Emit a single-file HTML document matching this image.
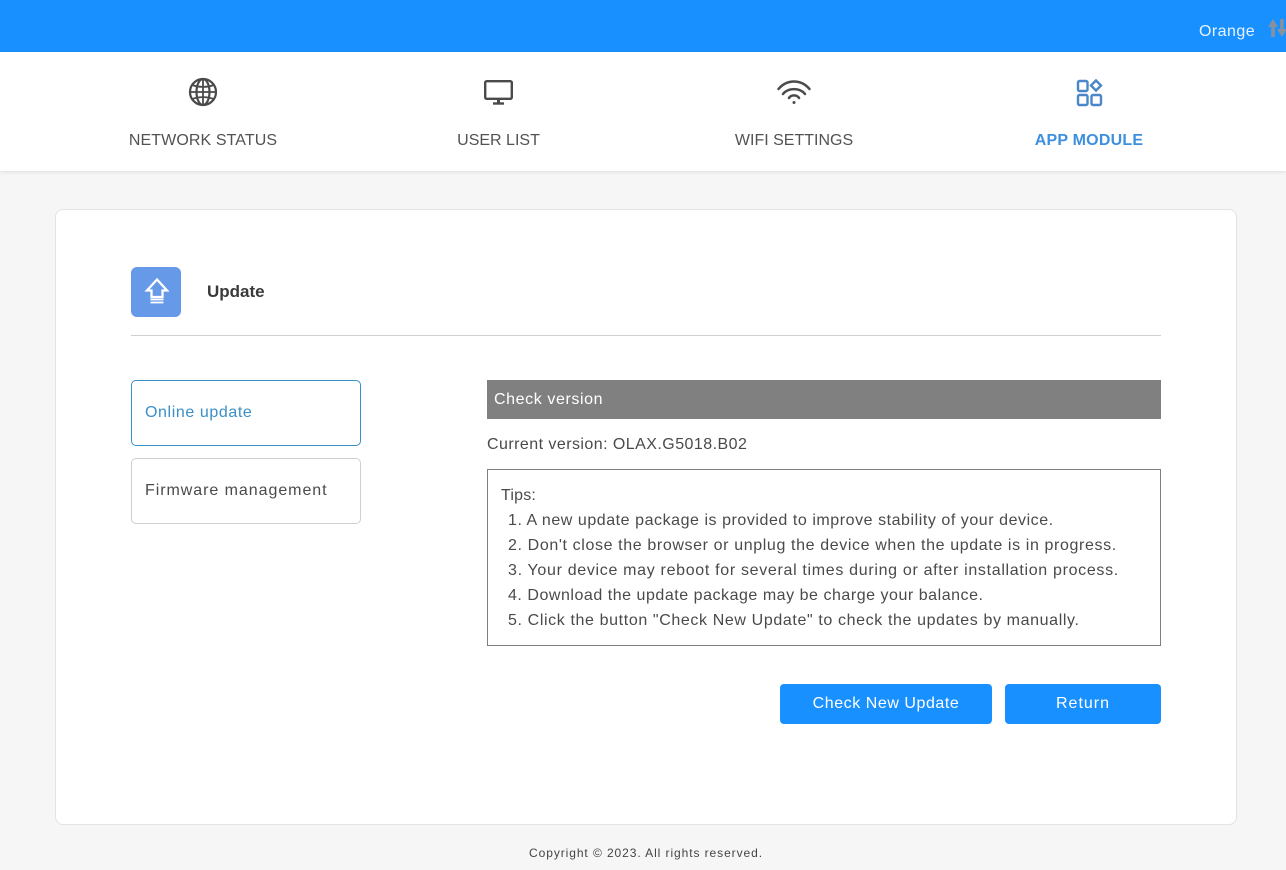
<!DOCTYPE html>
<html><head><meta charset="utf-8">
<style>
*{box-sizing:border-box}
html,body{margin:0;padding:0}
body{width:1286px;height:870px;position:relative;overflow:hidden;background:#f6f6f6;font-family:"Liberation Sans",sans-serif;color:#4a4a4a}
.a{position:absolute}
.t{position:absolute;white-space:nowrap;line-height:20px}
.c{transform:translateX(-50%)}
svg{position:absolute;overflow:visible}
</style></head><body>
<div class="a" style="left:0;top:0;width:1286px;height:52px;background:#1890ff"></div>
<div class="t" style="left:1199px;top:22px;font-size:16px;color:#e8f4ff;letter-spacing:.45px">Orange</div>
<svg style="left:1268px;top:18px" width="18" height="20" viewBox="0 0 18 20"><path d="M5 19V7" fill="none" stroke="#85929f" stroke-width="3.600"/><path d="M0 9l5-8 5 8z" fill="#85929f"/><path d="M14 1v12" fill="none" stroke="#85929f" stroke-width="3.600"/><path d="M9 11l5 8 5-8z" fill="#85929f"/></svg>

<div class="a" style="left:0;top:52px;width:1286px;height:119px;background:#fff;box-shadow:0 1px 4px rgba(0,0,0,.1)"></div>

<svg style="left:188px;top:77px" width="30" height="30" viewBox="0 0 30 30" fill="none" stroke="#4a4a4a" stroke-width="2.200"><circle cx="15" cy="15" r="13"/><ellipse cx="15" cy="15" rx="6.500" ry="13"/><path d="M15 2v26M2 15h26" stroke-width="1.800"/><path d="M4.500 8C10 10.500 20 10.500 25.500 8M4.500 22C10 19.500 20 19.500 25.500 22" stroke-width="1.800"/></svg>
<div class="t c" style="left:203px;top:131px;font-size:16px;letter-spacing:.1px;color:#525252">NETWORK STATUS</div>

<svg style="left:484px;top:80px" width="30" height="26" viewBox="0 0 30 26" fill="none" stroke="#4a4a4a" stroke-width="2.400"><rect x="1.200" y="1.200" width="26.600" height="17.600" rx="1.500"/><path d="M14.500 19v4" stroke-width="3"/><path d="M9 23.500h11"/></svg>
<div class="t c" style="left:498.500px;top:131px;font-size:16px;color:#525252">USER LIST</div>

<svg style="left:777px;top:80px" width="34" height="26" viewBox="0 0 34 26" fill="none" stroke="#4a4a4a" stroke-width="2.500" stroke-linecap="round"><path d="M1.500 9C10-1 24-1 32.500 9"/><path d="M6 14C11 7.500 23 7.500 28 14"/><path d="M12 18C14 14.500 20 14.500 22 18"/><circle cx="17" cy="22.500" r="1" fill="#4a4a4a" stroke-width="1"/></svg>
<div class="t c" style="left:794px;top:131px;font-size:16px;color:#525252">WIFI SETTINGS</div>

<svg style="left:1076px;top:79px" width="27" height="27" viewBox="0 0 27 27" fill="none" stroke="#4a86c8" stroke-width="2.400"><rect x="2" y="2" width="9.500" height="10" rx="1.500"/><rect x="2" y="16" width="9.500" height="10" rx="1.500"/><rect x="15.500" y="16" width="9.500" height="10" rx="1.500"/><path d="M20 1.500l5 5-5 5-5-5z"/></svg>
<div class="t c" style="left:1089px;top:131px;font-size:16px;font-weight:bold;color:#3d8fe0;letter-spacing:.2px">APP MODULE</div>

<div class="a" style="left:55px;top:209px;width:1182px;height:616px;background:#fff;border:1px solid #e3e3e3;border-radius:8px"></div>

<div class="a" style="left:131px;top:267px;width:50px;height:50px;background:#6699e8;border-radius:6px"></div>
<svg style="left:144px;top:278px" width="26" height="28" viewBox="0 0 26 28" fill="none" stroke="#fff" stroke-width="2.300"><path d="M13 1.500L3 12.500h4.500V19h11v-6.500H23z"/><path d="M6.500 21.500h13M6.500 24.500h13" stroke-width="1.700"/></svg>
<div class="t" style="left:207px;top:282px;font-size:17px;font-weight:bold;color:#3a3a3a;letter-spacing:0">Update</div>
<div class="a" style="left:131px;top:335px;width:1030px;height:1px;background:#cfcfcf"></div>

<div class="a" style="left:131px;top:380px;width:230px;height:66px;border:1px solid #3a8fc8;border-radius:5px"></div>
<div class="t" style="left:145px;top:403px;font-size:16px;color:#3a8fc8;letter-spacing:.6px">Online update</div>
<div class="a" style="left:131px;top:458px;width:230px;height:66px;border:1px solid #cfcfcf;border-radius:5px"></div>
<div class="t" style="left:145px;top:481px;font-size:16px;letter-spacing:.95px">Firmware management</div>

<div class="a" style="left:487px;top:380px;width:674px;height:39px;background:gray"></div>
<div class="t" style="left:494px;top:390px;font-size:16px;color:#fff;letter-spacing:.6px">Check version</div>
<div class="t" style="left:487px;top:435px;font-size:16px;letter-spacing:.45px">Current version: OLAX.G5018.B02</div>

<div class="a" style="left:487px;top:469px;width:674px;height:177px;border:1px solid #7f7f7f"></div>
<div class="t" style="left:501px;top:486px;font-size:16px;letter-spacing:.2px">Tips:</div>
<div class="t" style="left:508px;top:511px;font-size:16px;letter-spacing:.55px">1. A new update package is provided to improve stability of your device.</div>
<div class="t" style="left:508px;top:536px;font-size:16px;letter-spacing:.62px">2. Don't close the browser or unplug the device when the update is in progress.</div>
<div class="t" style="left:508px;top:561px;font-size:16px;letter-spacing:.68px">3. Your device may reboot for several times during or after installation process.</div>
<div class="t" style="left:508px;top:586px;font-size:16px;letter-spacing:.53px">4. Download the update package may be charge your balance.</div>
<div class="t" style="left:508px;top:611px;font-size:16px;letter-spacing:.62px">5. Click the button "Check New Update" to check the updates by manually.</div>

<div class="a" style="left:780px;top:684px;width:212px;height:40px;background:#1890ff;border-radius:4px"></div>
<div class="t c" style="left:886px;top:694px;font-size:16px;color:#fff;letter-spacing:.55px">Check New Update</div>
<div class="a" style="left:1005px;top:684px;width:156px;height:40px;background:#1890ff;border-radius:4px"></div>
<div class="t c" style="left:1083px;top:694px;font-size:16px;color:#fff;letter-spacing:1px">Return</div>

<div class="t c" style="left:646px;top:843px;font-size:12px;color:#444;letter-spacing:.92px">Copyright © 2023. All rights reserved.</div>
</body></html>
